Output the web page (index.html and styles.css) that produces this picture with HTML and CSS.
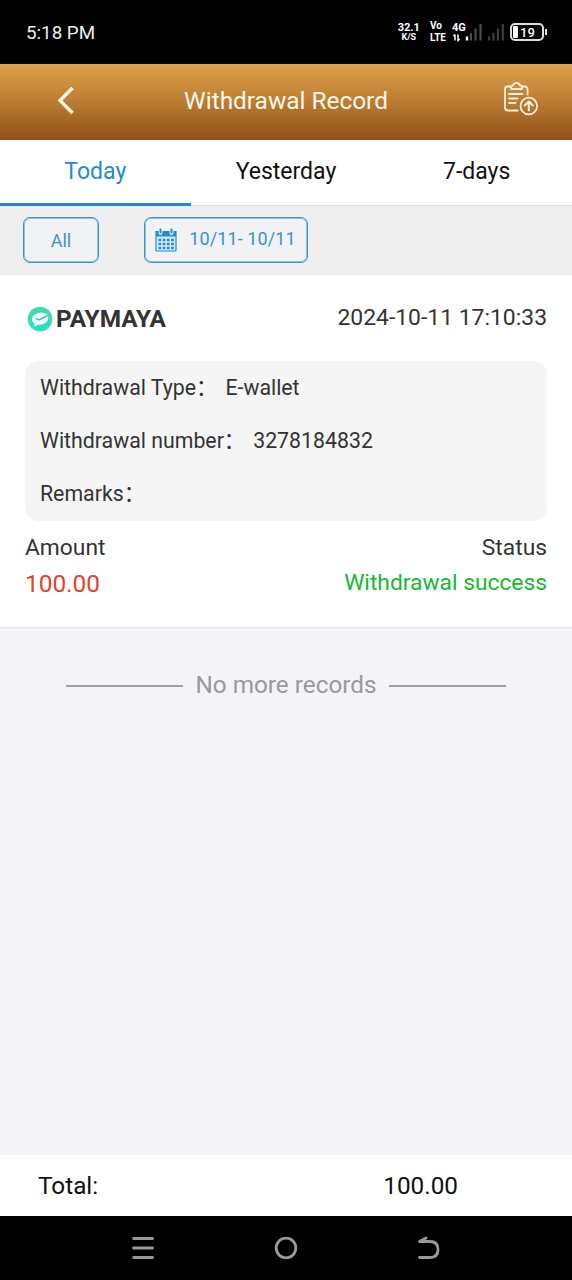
FILE: index.html
```html
<!DOCTYPE html>
<html lang="en">
<head>
<meta charset="utf-8">
<title>Withdrawal Record</title>
<link rel="stylesheet" href="styles.css">
</head>
<body>
<div class="status-bar">
  <span class="clock">5:18 PM</span>
  <div class="indicators">
    <div class="stack speed"><b>32.1</b><small>K/S</small></div>
    <div class="stack volte"><b>Vo</b><b>LTE</b></div>
    <div class="network">
      <b>4G</b>
      <svg class="signal-main" width="32" height="19" viewBox="0 0 32 19">
        <path d="M3 11.500v6M1.300 13 3 11.500M6 11.500v6l1.700-1.500" fill="none" stroke="#fff" stroke-width="1.500"/>
        <path d="M15 13.500v4" stroke="#fff" stroke-width="2.400"/>
        <path d="M19 10v7.500M23.500 5.500V17.500M28.500 1V17.500" stroke="#4b4b4b" stroke-width="2.200"/>
      </svg>
    </div>
    <svg class="signal-second" width="18" height="19" viewBox="0 0 18 19">
      <path d="M2 13.500v4M6.500 10v7.500M11 5.500V17.500M15.800 1V17.500" stroke="#3d3d3d" stroke-width="2.200"/>
    </svg>
    <div class="battery"><i></i><span>19</span></div>
  </div>
</div>
<header class="header">
  <svg class="back" width="20" height="32" viewBox="0 0 20 32"><path d="M16.500 3 4 15.500 16.500 28" fill="none" stroke="#fffaf0" stroke-width="3.300"/></svg>
  <h1>Withdrawal Record</h1>
  <svg class="report" width="36" height="36" viewBox="0 0 36 36" fill="none" stroke="#fff3dc" stroke-width="1.800" stroke-linecap="round" stroke-linejoin="round">
    <path d="M7 4.500H4.500Q2 4.500 2 7V25.500Q2 28.500 5 28.500H14.500M19 4.500H21.500Q24.500 4.500 24.500 7.500V12.500"/>
    <path d="M8 7V5Q8 3.500 10 3.500 11 .9 13.500 .9T17 3.500Q19 3.500 19 5V7ZM6 12H19.500M6 16.500H14.500M6 21H12.500"/>
    <circle cx="25.800" cy="24" r="8.300"/>
    <path d="M25.800 28.500V19.500M21.800 23.500 25.800 19.500 29.800 23.500" stroke-width="2"/>
  </svg>
</header>
<nav class="tabs">
  <a class="tab active">Today</a>
  <a class="tab">Yesterday</a>
  <a class="tab">7-days</a>
</nav>
<div class="filters">
  <button class="filter all">All</button>
  <button class="filter dates">
    <svg width="22" height="24" viewBox="0 0 22 24">
      <path d="M1 3.500H21V22Q21 23 20 23H2Q1 23 1 22Z" fill="#d9ebf8" stroke="#2489d3" stroke-width="1.200"/>
      <path d="M1 3.500H21V8.500H1Z" fill="#2489d3"/>
      <path d="M5.500 1.500V5M16.500 1.500V5" stroke="#eee" stroke-width="4" stroke-linecap="round"/>
      <path d="M5.500 1.500V4.500M16.500 1.500V4.500" stroke="#2489d3" stroke-width="2" stroke-linecap="round"/>
      <path d="M3.500 12H19M3.500 16H19M3.500 20H19" stroke="#2489d3" stroke-width="2.400" stroke-dasharray="2.700 1.500"/>
    </svg>
    <span>10/11- 10/11</span>
  </button>
</div>
<main class="content">
  <article class="record">
    <div class="record-head">
      <svg width="26" height="26" viewBox="0 0 26 26">
        <defs><linearGradient id="mint" x2="0" y2="1"><stop stop-color="#48dba8"/><stop offset="1" stop-color="#25dfc5"/></linearGradient></defs>
        <circle cx="13" cy="13" r="12.300" fill="url(#mint)"/>
        <path d="M7 20.500 7.500 17.500Q4.500 15.500 5 12.500C6 8.500 10 6.800 14 6.700S21.500 8 21.300 12C21 16 17 18.800 11 18.800Q9 20.500 7 20.500Z" fill="#f2fffa"/>
        <path d="M9 12.500 12 14 20.500 9.500" fill="none" stroke="#38c9a5" stroke-width="1.500"/>
      </svg>
      <strong>PAYMAYA</strong>
      <time>2024-10-11 17:10:33</time>
    </div>
    <dl class="details">
      <div><dt>Withdrawal Type：</dt><dd>E-wallet</dd></div>
      <div><dt>Withdrawal number：</dt><dd>3278184832</dd></div>
      <div><dt>Remarks：</dt><dd></dd></div>
    </dl>
    <div class="summary labels"><span>Amount</span><span>Status</span></div>
    <div class="summary values"><span class="amount">100.00</span><span class="success">Withdrawal success</span></div>
  </article>
  <p class="end"><span>No more records</span></p>
</main>
<footer class="total"><span>Total:</span><span class="sum">100.00</span></footer>
<div class="system-nav">
  <svg width="24" height="26" viewBox="0 0 24 26"><path d="M2.500 3.500H21.500M2.500 13H21.500M2.500 22.500H21.500" stroke="#999" stroke-width="2.800" stroke-linecap="round"/></svg>
  <svg width="26" height="26" viewBox="0 0 26 26"><circle cx="13" cy="13" r="9.800" fill="none" stroke="#999" stroke-width="2.800"/></svg>
  <svg width="24" height="26" viewBox="0 0 24 26"><path d="M9 3 2.500 6.500H13Q21 6.500 21 14.500T13 22.500H2.500" fill="none" stroke="#999" stroke-width="2.800" stroke-linecap="round" stroke-linejoin="round"/></svg>
</div>
</body>
</html>
```
FILE: styles.css
```css
* { box-sizing: border-box; }
body {
  margin: 0;
  height: 1280px;
  display: flex;
  flex-direction: column;
  font-family: Roboto, "Noto Sans CJK SC", sans-serif;
  background: #f3f3f8;
  color: #333;
}
svg { display: block; flex: none; }
.status-bar {
  height: 64px;
  background: #000;
  color: #fff;
  display: flex;
  justify-content: space-between;
  align-items: center;
  padding: 0 24px 0 26px;
}
.clock { font-size: 18.8px; color: #eee; padding-top: 1px; }
.indicators { display: flex; align-items: center; }
.stack { display: flex; flex-direction: column; align-items: center; font-size: 10px; line-height: 10px; }
.speed b { font-size: 11px; }
.speed small { font-size: 9px; line-height: 9px; font-weight: 700; }
.volte { margin-left: 10px; align-items: flex-start; line-height: 12px; }
.network { position: relative; margin-left: 6px; }
.network b { position: absolute; left: 0; top: -1px; font-size: 11px; line-height: 11px; }
.signal-second { margin-left: 3px; }
.battery {
  position: relative;
  width: 34px;
  height: 18px;
  border: 2px solid #ddd;
  border-radius: 5px;
  margin: 0 4px 0 5px;
  display: flex;
  align-items: center;
  padding-left: 1px;
  gap: 2px;
  font-size: 13px;
  font-weight: 500;
}
.battery i { width: 5px; height: 12px; background: #fff; border-radius: 1px; }
.battery::after { content: ""; position: absolute; right: -5px; top: 4px; width: 2px; height: 6px; background: #ddd; }
.header {
  height: 76px;
  background: linear-gradient(#dda04c, #bf8035 45%, #8f5116);
  color: #fff8ec;
  display: grid;
  grid-template-columns: 132px 1fr 132px;
  align-items: center;
  justify-items: center;
  padding-bottom: 2px;
}
.header h1 { margin: 0; padding-bottom: 2px; font-size: 24.4px; font-weight: 400; }
.report { margin: -2px 0 0 30px; }
.tabs { height: 66px; background: #fff; display: grid; grid-template-columns: repeat(3, 1fr); border-bottom: 1px solid #ddd; }
.tab { display: flex; align-items: center; justify-content: center; font-size: 23px; color: #111; padding-bottom: 1px; height: 66px; border-bottom: 3px solid transparent; }
.tab.active { color: #2489d3; border-color: #2489d3; }
.filters { height: 69px; background: #eee; display: flex; align-items: center; gap: 45px; padding: 0 23px 2px; }
.filter {
  height: 46px;
  border: 1px solid #3f91ca;
  box-shadow: inset 0 0 0 1px #8fc0e2;
  border-radius: 7px;
  background: #f1f2f3;
  color: #3a92d2;
  font: 18px Roboto, sans-serif;
  display: flex;
  align-items: center;
  justify-content: center;
  padding: 0;
}
.all { width: 76px; padding-top: 1px; }
.dates { width: 164px; gap: 12px; padding-right: 1px; }
.dates span { padding-bottom: 2px; letter-spacing: .1px; }
.content { flex: 1; }
.record { background: #fff; height: 353px; padding: 0 25px; border-bottom: 1px solid #e2e2e5; }
.record-head { height: 86px; display: flex; align-items: center; padding-left: 2px; }
.record-head svg { margin-top: 2px; }
.record-head strong { font-size: 24.4px; font-weight: 700; margin-left: 3px; padding-top: 1px; }
.record-head time { margin-left: auto; padding-bottom: 2px; font-size: 22.9px; }
.details { margin: 0; height: 160px; padding: 0 15px; background: #f5f5f5; border-radius: 14px; font-size: 21.3px; }
.details div { display: flex; align-items: center; height: 53px; gap: 8px; }
.details dt, .details dd { margin: 0; line-height: 30px; }
.summary { display: flex; justify-content: space-between; align-items: center; font-size: 22.8px; }
.labels { height: 54px; padding-bottom: 1px; }
.values { height: 16px; }
.amount { font-size: 24.4px; color: #df432f; padding-top: 1px; }
.success { color: #19b832; padding-bottom: 2px; }
.end { margin: 0 66px; height: 116px; display: flex; align-items: center; gap: 12px; color: #999; font-size: 24.3px; }
.end span { padding-bottom: 3px; }
.end::before, .end::after { content: ""; flex: 1; height: 2px; background: #a0a0a3; }
.total { height: 61px; background: #fff; display: flex; align-items: center; justify-content: space-between; padding: 0 114px 0 38px; color: #111; font-size: 24.3px; }
.system-nav { height: 64px; background: #000; display: grid; grid-template-columns: repeat(3, 143px); justify-content: center; align-items: center; justify-items: center; }
```
